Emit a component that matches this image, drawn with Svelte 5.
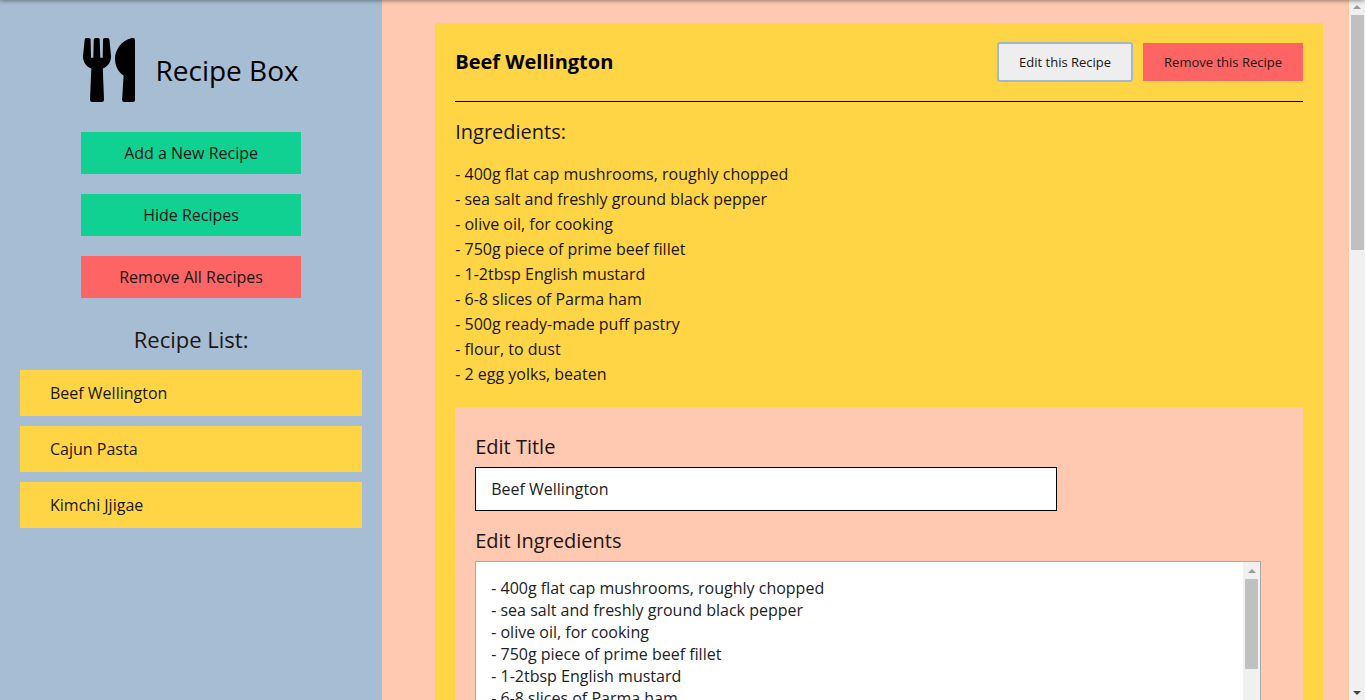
<script>
  const recipes = ['Beef Wellington', 'Cajun Pasta', 'Kimchi Jjigae'];
  const ingredients = [
    '400g flat cap mushrooms, roughly chopped',
    'sea salt and freshly ground black pepper',
    'olive oil, for cooking',
    '750g piece of prime beef fillet',
    '1-2tbsp English mustard',
    '6-8 slices of Parma ham',
    '500g ready-made puff pastry',
    'flour, to dust',
    '2 egg yolks, beaten'
  ];
  let title = $state('Beef Wellington');
  let text = $state(ingredients.map((item) => `- ${item}`).join('\n'));
</script>

<div class="app">
  <aside>
    <header>
      <svg class="logo" viewBox="0 0 52 64" aria-hidden="true">
        <path d="M3.2 0H6Q7.5 0 7.6 1.5L8 19.7H10.3L10.8 1.5Q10.9 0 12.3 0H15.2Q16.6 0 16.7 1.5L17.3 19.7H19.7L20 1.5Q20.1 0 21.6 0H24.8Q26.2 0 26.4 1.5L28 18C28.2 24 25 28.5 19.8 30.5L21 61.5Q21.1 64 18.8 64H9.2Q6.9 64 7 61.5L8.3 30.5C3 28.5-.2 24 0 18L1.7 1.5Q1.8 0 3.2 0Z" />
        <path d="M50 0Q52 0 52 2V62Q52 64 50 64H41.2Q39 64 39.1 61.8L40.6 37.4C35.5 34.5 32 28 32 20.5C32 12 38.5 2.5 48 .3Q49 0 50 0Z" />
      </svg>
      <h1>Recipe Box</h1>
    </header>
    <div class="actions">
      <button type="button" class="green">Add a New Recipe</button>
      <button type="button" class="green">Hide Recipes</button>
      <button type="button" class="red">Remove All Recipes</button>
    </div>
    <h2>Recipe List:</h2>
    <nav>
      {#each recipes as recipe}
        <button type="button">{recipe}</button>
      {/each}
    </nav>
  </aside>

  <main>
    <article>
      <div class="top">
        <h2>{title}</h2>
        <button type="button" class="edit">Edit this Recipe</button>
        <button type="button" class="red">Remove this Recipe</button>
      </div>
      <h3>Ingredients:</h3>
      <ul>
        {#each ingredients as item}
          <li>- {item}</li>
        {/each}
      </ul>
      <form>
        <label for="title">Edit Title</label>
        <input id="title" type="text" bind:value={title} />
        <label for="ingredients">Edit Ingredients</label>
        <div class="area">
          <textarea id="ingredients" bind:value={text}></textarea>
          <div class="scrollbar inner" aria-hidden="true">
            <span class="arrow up"></span>
            <span class="thumb"></span>
          </div>
        </div>
      </form>
    </article>
  </main>

  <div class="scrollbar" aria-hidden="true">
    <span class="arrow up"></span>
    <span class="thumb"></span>
    <span class="arrow down"></span>
  </div>
  <div class="shade"></div>
</div>

<style>
  :global(body) {
    margin: 0;
  }
  .app {
    position: relative;
    display: grid;
    grid-template-columns: 28% 1fr 16px;
    height: 100vh;
    overflow: hidden;
    background: #ffc8b0;
    color: #1a1614;
    font: 400 16px/25px 'Open Sans', sans-serif;
  }
  .shade {
    position: absolute;
    inset: -4px 0 auto;
    height: 4px;
    box-shadow: 0 0 5px rgba(0, 0, 0, 0.6);
    pointer-events: none;
  }
  h1,
  h2,
  h3,
  ul {
    margin: 0;
    padding: 0;
    font-weight: inherit;
    list-style: none;
  }
  button {
    border: 0;
    padding: 0 20px;
    font: inherit;
    color: inherit;
    cursor: pointer;
  }
  .green {
    background: #11d192;
  }
  .red {
    background: #ff6464;
  }

  aside {
    background: #a7bdd3;
    padding: 38px 20px 0;
  }
  header {
    display: flex;
    justify-content: center;
    align-items: center;
    gap: 20px;
  }
  .logo {
    width: 52px;
    height: 64px;
  }
  h1 {
    color: #000;
    font-size: 28px;
    line-height: 40px;
  }
  .actions {
    display: grid;
    justify-content: center;
    grid-template-columns: 220px;
    gap: 20px;
    margin: 30px 0 25px;
  }
  .actions button {
    height: 42px;
  }
  aside h2 {
    font-size: 22px;
    line-height: 32px;
    text-align: center;
  }
  nav {
    display: grid;
    gap: 10px;
    margin-top: 15px;
  }
  nav button {
    height: 46px;
    padding: 0 30px;
    background: #ffd545;
    text-align: left;
  }

  main {
    min-width: 0;
    overflow: hidden;
    padding: 23px 26px 0 53px;
  }
  article {
    background: #ffd545;
    padding: 19px 20px 20px;
  }
  .top {
    display: flex;
    align-items: center;
    gap: 10px;
    border-bottom: 1px solid #000;
    padding-bottom: 19px;
  }
  .top h2 {
    flex: 1;
    color: #000;
    font-size: 20px;
    line-height: 28px;
    font-weight: 700;
  }
  .top button {
    height: 38px;
    padding: 0 21px;
    font-size: 13px;
  }
  .top .edit {
    height: 40px;
    border: 2px solid #a0b8cd;
    border-radius: 3px;
    padding: 0 20px;
    background: #eee;
  }
  h3 {
    margin: 17px 0 18px;
    font-size: 20px;
  }
  form {
    margin-top: 20px;
    padding: 25px 20px 20px;
    background: #ffc8b0;
  }
  label {
    display: block;
    margin-bottom: 5px;
    font-size: 20px;
    line-height: 30px;
  }
  input,
  textarea {
    display: block;
    box-sizing: border-box;
    margin: 0;
    padding: 10px 15px;
    border: 1px solid #000;
    border-radius: 0;
    background: #fff;
    color: #222;
    font: inherit;
    line-height: 22px;
    outline: 0;
  }
  input {
    width: 72%;
    height: 44px;
    margin-bottom: 15px;
  }
  .area {
    display: flex;
    height: 200px;
    margin-right: 22px;
    border: 1px solid #a9a9a9;
    background: #fff;
  }
  textarea {
    flex: 1;
    min-width: 0;
    border: 0;
    padding: 15px;
    resize: none;
    overflow: hidden;
  }
  .scrollbar {
    display: flex;
    flex-direction: column;
    align-items: center;
    box-sizing: border-box;
    padding: 5px 0;
    background: #f0f0f0;
  }
  .inner {
    width: 17px;
    padding-top: 7px;
  }
  .arrow {
    border: 4px solid transparent;
    border-top-width: 0;
    border-bottom: 4px solid #999;
  }
  .down {
    margin-top: auto;
    border-top: 4px solid #444;
    border-bottom-width: 0;
  }
  .thumb {
    width: 13px;
    height: 235px;
    margin-top: 6px;
    background: #c0c0c0;
  }
  .inner .thumb {
    height: 90px;
  }
</style>
